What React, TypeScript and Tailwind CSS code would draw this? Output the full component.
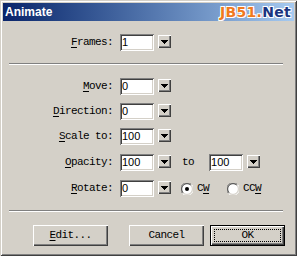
import React from "react";

const mono = "font-['Liberation_Mono',monospace] text-[11px] tracking-[-0.6px] leading-none text-black";
const sunken = "bg-white shadow-[inset_1px_1px_0_#808080,inset_-1px_-1px_0_#ffffff,inset_2px_2px_0_#404040,inset_-2px_-2px_0_#d4d0c8]";
const raised = "bg-[#d4d0c8] shadow-[inset_1px_1px_0_#ffffff,inset_-1px_-1px_0_#404040,inset_-2px_-2px_0_#808080]";

function Arrow() {
  return (
    <div className={`w-[13px] h-[13px] mt-[1px] self-start flex items-center justify-center ${raised}`}>
      <svg width="7" height="4" viewBox="0 0 7 4" shapeRendering="crispEdges">
        <rect x="0" y="0" width="7" height="1" fill="#000" />
        <rect x="1" y="1" width="5" height="1" fill="#000" />
        <rect x="2" y="2" width="3" height="1" fill="#000" />
        <rect x="3" y="3" width="1" height="1" fill="#000" />
      </svg>
    </div>
  );
}

function Combo({ value }: { value: string }) {
  return (
    <div className="flex">
      <div className={`w-[34px] h-[17px] flex items-center pl-[2px] ${sunken}`}>
        <span className="font-['Liberation_Sans',sans-serif] text-[11px] leading-none text-black">{value}</span>
      </div>
      <div className="ml-[4px] flex">
        <Arrow />
      </div>
    </div>
  );
}

function Label({ ul, rest }: { ul: string; rest: string }) {
  return (
    <div className={`w-[113px] flex justify-end ${mono}`}>
      <span>
        <span className="underline underline-offset-[2px]">{ul}</span>
        {rest}
      </span>
    </div>
  );
}

function Radio({ checked }: { checked: boolean }) {
  return (
    <svg width="12" height="12" viewBox="0 0 12 12">
      <circle cx="6" cy="6" r="5.5" fill="#ffffff" />
      <path d="M1.5 10.5 A 6 6 0 0 1 10.5 1.5" stroke="#808080" strokeWidth="1" fill="none" transform="translate(0 0)" />
      <path d="M2.2 9.8 A 5 5 0 0 1 9.8 2.2" stroke="#404040" strokeWidth="1" fill="none" />
      <path d="M10.5 1.5 A 6 6 0 0 1 1.5 10.5" stroke="#ffffff" strokeWidth="1" fill="none" />
      <path d="M9.8 2.2 A 5 5 0 0 1 2.2 9.8" stroke="#d4d0c8" strokeWidth="1" fill="none" />
      {checked && <circle cx="6" cy="6" r="2" fill="#000" />}
    </svg>
  );
}

function Separator({ mt }: { mt: string }) {
  return <div className={`ml-[9px] w-[274px] h-[2px] border-t border-t-[#808080] border-b border-b-white ${mt}`} />;
}

function Btn({ children, def, cls }: { children: React.ReactNode; def?: boolean; cls?: string }) {
  if (def) {
    return (
      <div className={`w-[75px] h-[21px] border border-black ${cls ?? ""}`}>
        <div className={`w-full h-full p-[3px] ${raised}`}>
          <div className={`w-full h-full border border-dotted border-black flex items-center justify-center ${mono}`}>{children}</div>
        </div>
      </div>
    );
  }
  return (
    <div className={`w-[75px] h-[21px] flex items-center justify-center ${raised} ${mono} ${cls ?? ""}`}>{children}</div>
  );
}

export default function App() {
  return (
    <div className="w-[297px] h-[256px] bg-[#d4d0c8] shadow-[inset_1px_1px_0_#d4d0c8,inset_-1px_-1px_0_#404040,inset_2px_2px_0_#ffffff,inset_-2px_-2px_0_#808080] flex flex-col overflow-hidden">
      <div className="mt-[3px] mx-[3px] h-[18px] bg-gradient-to-r from-[#0a246a] to-[#a6caf0] flex items-center justify-between pl-[2px] pr-[3px]">
        <span className="font-['Liberation_Sans',sans-serif] font-bold text-[12px] text-white leading-none">Animate</span>
        <span className="font-['DejaVu_Sans',sans-serif] font-bold text-[14px] leading-none tracking-[0.3px] [text-shadow:1px_1px_0_#fff,-1px_-1px_0_#fff,1px_-1px_0_#fff,-1px_1px_0_#fff]">
          <span className="text-[#f07a1e]">JB51.</span>
          <span className="text-[#1a3580]">Net</span>
        </span>
      </div>

      <div className="mt-[13px] flex items-center">
        <Label ul="F" rest="rames:" />
        <div className="ml-[7px]"><Combo value="1" /></div>
      </div>

      <Separator mt="mt-[12px]" />

      <div className="mt-[13px] flex items-center">
        <Label ul="M" rest="ove:" />
        <div className="ml-[7px]"><Combo value="0" /></div>
      </div>
      <div className="mt-[8px] flex items-center">
        <Label ul="D" rest="irection:" />
        <div className="ml-[7px]"><Combo value="0" /></div>
      </div>
      <div className="mt-[8px] flex items-center">
        <Label ul="S" rest="cale to:" />
        <div className="ml-[7px]"><Combo value="100" /></div>
      </div>
      <div className="mt-[9px] flex items-center">
        <Label ul="O" rest="pacity:" />
        <div className="ml-[7px]"><Combo value="100" /></div>
        <span className={`ml-[11px] ${mono}`}>to</span>
        <div className="ml-[15px]"><Combo value="100" /></div>
      </div>
      <div className="mt-[9px] flex items-center">
        <Label ul="R" rest="otate:" />
        <div className="ml-[7px]"><Combo value="0" /></div>
        <div className="ml-[10px] flex items-center">
          <Radio checked />
          <span className={`ml-[4px] ${mono}`}>
            C<span className="underline underline-offset-[2px]">W</span>
          </span>
        </div>
        <div className="ml-[18px] flex items-center">
          <Radio checked={false} />
          <span className={`ml-[4px] ${mono}`}>
            CC<span className="underline underline-offset-[2px]">W</span>
          </span>
        </div>
      </div>

      <Separator mt="mt-[13px]" />

      <div className="mt-[13px] flex">
        <Btn cls="ml-[33px]">
          <span><span className="underline underline-offset-[2px]">E</span>dit...</span>
        </Btn>
        <Btn cls="ml-[21px]">Cancel</Btn>
        <Btn def cls="ml-[6px]">OK</Btn>
      </div>
    </div>
  );
}
